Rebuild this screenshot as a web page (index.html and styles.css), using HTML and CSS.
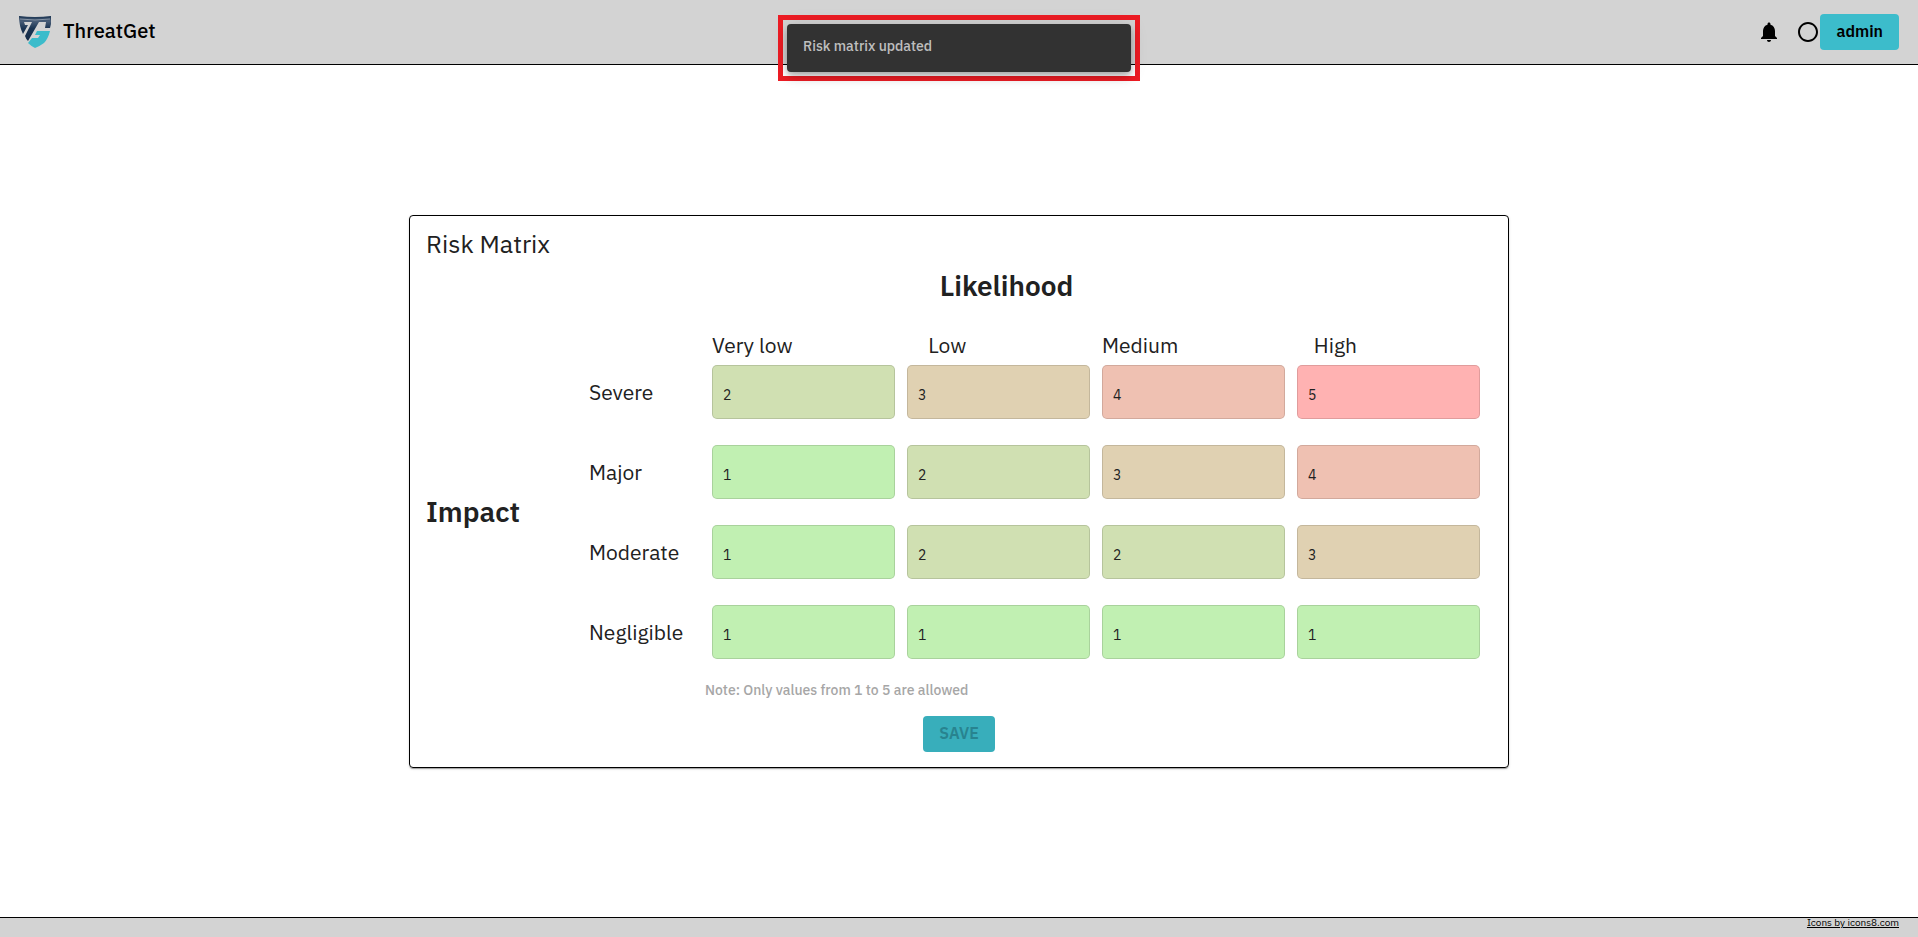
FILE: index.html
```
<!DOCTYPE html>
<html lang="en">
<head>
<meta charset="utf-8">
<title>ThreatGet</title>
<meta name="viewport" content="width=device-width, initial-scale=1">
<link rel="stylesheet" href="styles.css">
</head>
<body>
<header class="topbar">
  <div class="brand">
    <svg class="logo" viewBox="0 0 32 32" aria-hidden="true">
      <defs>
        <linearGradient id="navy" x1="0" y1="0" x2="0" y2="1">
          <stop offset="0" stop-color="#16304e"/>
          <stop offset=".2" stop-color="#4a5e78"/>
          <stop offset=".5" stop-color="#1b3452"/>
          <stop offset="1" stop-color="#142b47"/>
        </linearGradient>
      </defs>
      <path fill="url(#navy)" d="M0 0Q16 2 32 0V8L31 12H26L27 6H20L9 25Q7 23 6 20L13 6H5L6 9H9L4 18Q0 10 0 0Z"/>
      <path fill="none" stroke="#8795a6" stroke-width="1" d="M1 3Q16 5 31 3"/>
      <path fill="#3cbccb" d="M18 15H31Q29 23 25 27Q21 30 16 32Q12 30 9 27L13 22H19L21 19H16Z"/>
    </svg>
    <span class="brand-name">ThreatGet</span>
  </div>
  <div class="actions">
    <button class="icon-button" type="button" aria-label="Notifications">
      <svg viewBox="0 0 24 24" width="24" height="24"><path d="M12 22c1.1 0 2-.9 2-2h-4c0 1.1.89 2 2 2zm6-6v-5c0-3.07-1.64-5.64-4.5-6.32V4c0-.83-.67-1.5-1.5-1.5s-1.5.67-1.5 1.5v.68C7.63 5.36 6 7.92 6 11v5l-2 2v1h16v-1l-2-2z"/></svg>
    </button>
    <div class="account">
      <svg viewBox="0 0 24 24" width="24" height="24" aria-hidden="true"><path d="M12 2C6.48 2 2 6.48 2 12s4.48 10 10 10 10-4.480 10-10S17.520 2 12 2zm0 18c-4.420 0-8-3.580-8-8s3.580-8 8-8 8 3.580 8 8-3.580 8-8 8z"/></svg>
      <button class="button" type="button">admin</button>
    </div>
  </div>
</header>

<div class="toast-frame">
  <div class="toast" role="status">Risk matrix updated</div>
</div>

<main class="page">
  <form class="card">
    <h1 class="card-title">Risk Matrix</h1>
    <h2 class="axis axis-x">Likelihood</h2>
    <div class="matrix">
      <div class="columns">
        <span id="c1">Very low</span><span id="c2">Low</span><span id="c3">Medium</span><span id="c4">High</span>
      </div>
      <h2 class="axis axis-y">Impact</h2>
      <div class="row-labels">
        <span id="r1">Severe</span><span id="r2">Major</span><span id="r3">Moderate</span><span id="r4">Negligible</span>
      </div>
      <div class="cells">
        <input class="cell v2" type="number" min="1" max="5" value="2" aria-labelledby="r1 c1">
        <input class="cell v3" type="number" min="1" max="5" value="3" aria-labelledby="r1 c2">
        <input class="cell v4" type="number" min="1" max="5" value="4" aria-labelledby="r1 c3">
        <input class="cell v5" type="number" min="1" max="5" value="5" aria-labelledby="r1 c4">
        <input class="cell v1" type="number" min="1" max="5" value="1" aria-labelledby="r2 c1">
        <input class="cell v2" type="number" min="1" max="5" value="2" aria-labelledby="r2 c2">
        <input class="cell v3" type="number" min="1" max="5" value="3" aria-labelledby="r2 c3">
        <input class="cell v4" type="number" min="1" max="5" value="4" aria-labelledby="r2 c4">
        <input class="cell v1" type="number" min="1" max="5" value="1" aria-labelledby="r3 c1">
        <input class="cell v2" type="number" min="1" max="5" value="2" aria-labelledby="r3 c2">
        <input class="cell v2" type="number" min="1" max="5" value="2" aria-labelledby="r3 c3">
        <input class="cell v3" type="number" min="1" max="5" value="3" aria-labelledby="r3 c4">
        <input class="cell v1" type="number" min="1" max="5" value="1" aria-labelledby="r4 c1">
        <input class="cell v1" type="number" min="1" max="5" value="1" aria-labelledby="r4 c2">
        <input class="cell v1" type="number" min="1" max="5" value="1" aria-labelledby="r4 c3">
        <input class="cell v1" type="number" min="1" max="5" value="1" aria-labelledby="r4 c4">
      </div>
      <p class="note">Note: Only values from 1 to 5 are allowed</p>
    </div>
    <button class="button save" type="submit" disabled>SAVE</button>
  </form>
</main>

<footer class="footer"><a href="#icons8">Icons by icons8.com</a></footer>
</body>
</html>
```
FILE: styles.css
```
* { box-sizing: border-box; }

body {
  margin: 0;
  min-height: 100vh;
  display: flex;
  flex-direction: column;
  font-family: "IBM Plex Sans", "Noto Sans", sans-serif;
  font-size: 14px;
  color: #212121;
  background: #fff;
}

h1, h2, p { margin: 0; }

.topbar {
  display: flex;
  align-items: center;
  justify-content: space-between;
  height: 65px;
  padding: 0 19px;
  background: #d3d3d3;
  border-bottom: 1px solid #000;
  color: #000;
}

.brand { display: flex; align-items: center; gap: 12px; }
.logo { width: 32px; height: 32px; }
.brand-name { font-size: 20px; font-weight: 500; line-height: 24px; padding-bottom: 2px; }

.actions { display: flex; align-items: center; gap: 15px; }
.actions svg { display: block; }
.account { display: flex; align-items: center; }
.icon-button { padding: 0; border: 0; background: none; }

.button {
  height: 36px;
  padding: 0 16px 2px;
  border: 0;
  border-radius: 4px;
  background: #3cbccb;
  color: #000;
  font: inherit;
  font-size: 16px;
  font-weight: 600;
  line-height: 34px;
}

.toast-frame {
  position: absolute;
  top: 15px;
  left: 50%;
  width: 362px;
  transform: translateX(-50%);
  padding: 4px;
  border: 5px solid #ed1c24;
}

.toast {
  padding: 12px 16px 16px;
  border-radius: 4px;
  background: #323232;
  color: rgba(255, 255, 255, .7);
  font-weight: 500;
  line-height: 20px;
  box-shadow: 0 3px 5px -1px rgba(0, 0, 0, .2), 0 6px 10px rgba(0, 0, 0, .14), 0 1px 18px rgba(0, 0, 0, .12);
}

.page {
  flex: 1;
  display: flex;
  align-items: center;
  justify-content: center;
}

.card {
  display: flex;
  flex-direction: column;
  width: 100%;
  max-width: 1100px;
  padding: 16px 16px 15px;
  border: 1px solid #000;
  border-radius: 4px;
  box-shadow: 0 2px 1px -1px rgba(0, 0, 0, .2), 0 1px 1px rgba(0, 0, 0, .14), 0 1px 3px rgba(0, 0, 0, .12);
}

.card-title { font-size: 25px; font-weight: 400; line-height: 24px; }
.axis { font-size: 28px; font-weight: 600; line-height: 36px; }
.axis-x { margin: 12px 0 28px; padding-left: 95px; text-align: center; }
.axis-y { align-self: center; }

.matrix {
  display: grid;
  grid-template-columns: 163px 116px 1fr;
}

.columns {
  grid-column: 3;
  display: flex;
  justify-content: space-between;
  padding: 0 135px 7px 7px;
  font-size: 21px;
  line-height: 26px;
}

.row-labels {
  grid-column: 2;
  display: grid;
  grid-auto-rows: 1fr;
  align-items: center;
  row-gap: 26px;
  font-size: 21px;
  line-height: 26px;
}

.cells {
  display: grid;
  grid-template-columns: repeat(4, 1fr);
  gap: 26px 12px;
  padding: 0 12px 0 7px;
}

.cell {
  width: 100%;
  height: 54px;
  padding: 8px 10px 2px;
  border: 1px solid rgba(0, 0, 0, .12);
  border-radius: 5px;
  color: #212121;
  font: inherit;
  appearance: textfield;
}

.v1 { background: #c1f0b2; }
.v2 { background: #d0e0b2; }
.v3 { background: #e0d1b2; }
.v4 { background: #efc1b2; }
.v5 { background: #ffb2b2; }

.note {
  grid-column: 3;
  margin: 21px 0 16px;
  color: #a6a6a6;
  font-weight: 500;
  line-height: 20px;
}

.save {
  align-self: center;
  background: #38aebb;
  color: #28838f;
}

.footer {
  height: 20px;
  padding: 0 19px;
  border-top: 1px solid #000;
  background: #d3d3d3;
  font-size: 10px;
  line-height: 10px;
  text-align: right;
}

.footer a { color: #000; }
```
